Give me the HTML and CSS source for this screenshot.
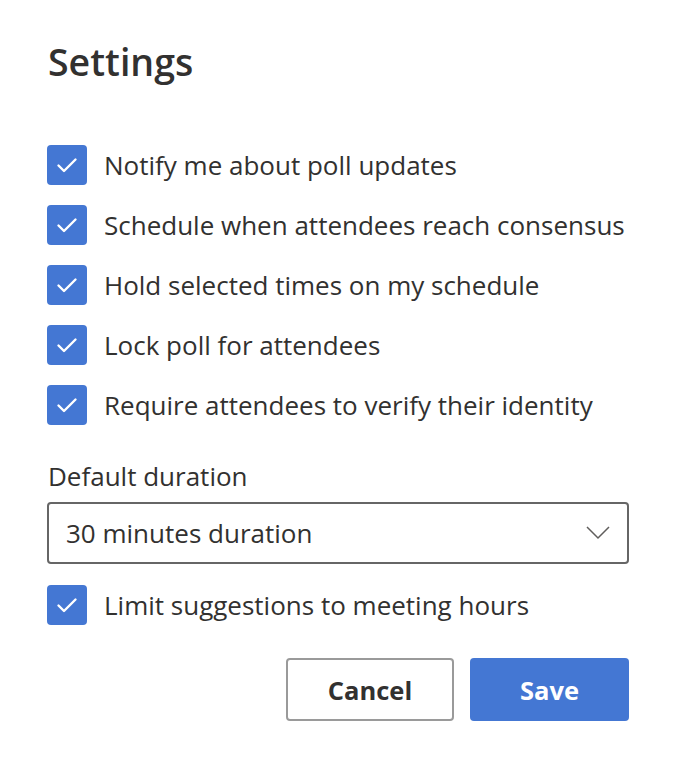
FILE: index.html
```html
<!DOCTYPE html>
<html>
<head>
<meta charset="utf-8">
<link rel="stylesheet" href="styles.css">
</head>
<body>
<div class="panel">
  <h1 class="title">Settings</h1>
  <div class="options">
    <label class="opt"><span class="box"><svg viewBox="0 0 40 40" width="40" height="40"><path d="M11.5 20.5 L17 26 L28.5 14.5" fill="none" stroke="#fff" stroke-width="2.4" stroke-linecap="round" stroke-linejoin="round"/></svg></span><span class="txt">Notify me about poll updates</span></label>
    <label class="opt"><span class="box"><svg viewBox="0 0 40 40" width="40" height="40"><path d="M11.5 20.5 L17 26 L28.5 14.5" fill="none" stroke="#fff" stroke-width="2.4" stroke-linecap="round" stroke-linejoin="round"/></svg></span><span class="txt">Schedule when attendees reach consensus</span></label>
    <label class="opt"><span class="box"><svg viewBox="0 0 40 40" width="40" height="40"><path d="M11.5 20.5 L17 26 L28.5 14.5" fill="none" stroke="#fff" stroke-width="2.4" stroke-linecap="round" stroke-linejoin="round"/></svg></span><span class="txt">Hold selected times on my schedule</span></label>
    <label class="opt"><span class="box"><svg viewBox="0 0 40 40" width="40" height="40"><path d="M11.5 20.5 L17 26 L28.5 14.5" fill="none" stroke="#fff" stroke-width="2.4" stroke-linecap="round" stroke-linejoin="round"/></svg></span><span class="txt">Lock poll for attendees</span></label>
    <label class="opt"><span class="box"><svg viewBox="0 0 40 40" width="40" height="40"><path d="M11.5 20.5 L17 26 L28.5 14.5" fill="none" stroke="#fff" stroke-width="2.4" stroke-linecap="round" stroke-linejoin="round"/></svg></span><span class="txt">Require attendees to verify their identity</span></label>
  </div>
  <div class="field-label">Default duration</div>
  <div class="select">
    <span class="select-text">30 minutes duration</span>
    <svg class="chev" viewBox="0 0 24 14" width="24" height="14"><path d="M1 1 L12 12 L23 1" fill="none" stroke="#605e5c" stroke-width="1.5"/></svg>
  </div>
  <label class="opt opt-last"><span class="box"><svg viewBox="0 0 40 40" width="40" height="40"><path d="M11.5 20.5 L17 26 L28.5 14.5" fill="none" stroke="#fff" stroke-width="2.4" stroke-linecap="round" stroke-linejoin="round"/></svg></span><span class="txt">Limit suggestions to meeting hours</span></label>
  <div class="actions">
    <button class="btn btn-cancel">Cancel</button>
    <button class="btn btn-save">Save</button>
  </div>
</div>
</body>
</html>
```
FILE: styles.css
```css
html, body {
  margin: 0;
  padding: 0;
  background: #ffffff;
}
body {
  font-family: "Open Sans", "Noto Sans", sans-serif;
  color: #323130;
}
.panel {
  padding: 36px 49px 0 47px;
  width: 582px;
}
.title {
  margin: 0 0 0 1px;
  font-size: 37.5px;
  font-weight: 600;
  line-height: 52px;
  color: #323130;
}
.options {
  margin-top: 57px;
  display: flex;
  flex-direction: column;
  gap: 20px;
}
.opt {
  display: flex;
  align-items: center;
  gap: 17px;
  height: 40px;
}
.box {
  width: 40px;
  height: 40px;
  border-radius: 4px;
  background: #4477d3;
  display: flex;
  flex: none;
}
.txt {
  font-size: 26px;
  color: #323130;
  white-space: nowrap;
}
.field-label {
  margin: 33px 0 0 1px;
  font-size: 26px;
  line-height: 36px;
}
.select {
  box-sizing: border-box;
  margin-top: 8px;
  height: 62px;
  border: 2px solid #666666;
  border-radius: 4px;
  display: flex;
  align-items: center;
  justify-content: space-between;
  padding: 0 17px 0 17px;
}
.select-text {
  font-size: 26px;
}
.chev {
  margin-top: 0;
}
.opt-last {
  margin-top: 21px;
}
.actions {
  margin-top: 33px;
  display: flex;
  justify-content: flex-end;
  gap: 16px;
}
.btn {
  box-sizing: border-box;
  height: 63px;
  border-radius: 4px;
  font-family: "Open Sans", "Noto Sans", sans-serif;
  font-size: 25.5px;
  font-weight: 700;
  cursor: pointer;
}
.btn-cancel {
  width: 168px;
  background: #ffffff;
  border: 2px solid #9a9a9a;
  color: #323130;
}
.btn-save {
  width: 159px;
  background: #4477d3;
  border: none;
  color: #ffffff;
}
```
